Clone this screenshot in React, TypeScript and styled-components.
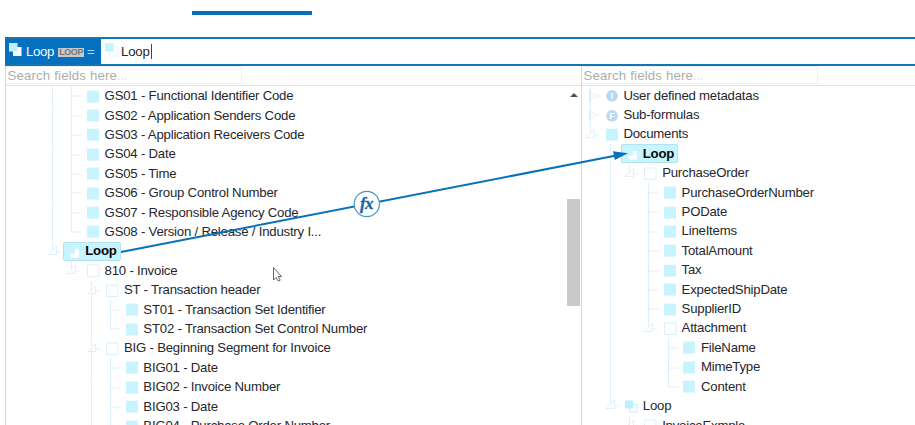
import React from "react";
import styled, { createGlobalStyle } from "styled-components";

const Global = createGlobalStyle`
  * { box-sizing: border-box; }
  body { margin: 0; background: #fff; overflow: hidden; }
`;

const Page = styled.main`
  position: relative;
  width: 915px;
  height: 425px;
  overflow: hidden;
  display: flex;
  flex-direction: column;
  padding-left: 5px;
  font-family: "Liberation Sans", Arial, sans-serif;
  font-size: 13.2px;
  color: #26262c;
`;
const TabArea = styled.header`
  height: 37px;
  flex: none;
  padding: 11px 0 0 187px;
`;
const ActiveTab = styled.div`
  width: 120px;
  height: 4px;
  background: #0570b8;
`;
const FormulaBar = styled.section`
  display: flex;
  flex: none;
  height: 29px;
  border-top: 2px solid #1574b5;
  border-bottom: 2px solid #1574b5;
`;
const Target = styled.div`
  display: flex;
  align-items: center;
  width: 96px;
  padding: 0 0 1px 4px;
  background: #0470bf;
  color: #f4fbff;
`;
const TargetIcon = styled.span`
  display: flex;
  margin-top: -4px;
`;
const TargetName = styled.span`
  margin-left: 4px;
  letter-spacing: -0.3px;
`;
const Badge = styled.span`
  height: 9px;
  margin: 3px 0 0 4px;
  padding: 0 1px;
  background: #c9c9cb;
  color: #77777d;
  font-size: 9px;
  line-height: 9.5px;
  letter-spacing: -0.4px;
  font-weight: bold;
`;
const Equals = styled.span`
  margin-left: 3px;
  color: #a5dcff;
`;
const Expression = styled.div`
  display: flex;
  align-items: center;
  padding: 0 0 1px 4px;
`;
const ExpressionText = styled.span`
  margin-left: 3px;
  padding-right: 1px;
  line-height: 15px;
  letter-spacing: -0.2px;
  border-right: 1px solid #444;
`;
const Panels = styled.div`
  display: flex;
  flex: 1;
  min-height: 0;
`;
const Panel = styled.section<{ $width: number }>`
  width: ${(p) => p.$width}px;
  flex: none;
  display: flex;
  flex-direction: column;
  border-left: 1px solid #c5dcee;
`;
const SearchRow = styled.div`
  height: 20px;
  flex: none;
  border-bottom: 1px solid #dbe7f1;
`;
const Search = styled.div`
  width: 236px;
  height: 18px;
  padding-left: 1.5px;
  border: 1px solid #edf0f4;
  border-left: 0;
  line-height: 17px;
  color: #adadad;
  letter-spacing: 0.18px;
`;
const Ellipsis = styled.span`
  color: #dcdcdc;
  letter-spacing: -0.4px;
`;
const PanelBody = styled.div`
  display: flex;
  flex: 1;
  min-height: 0;
  overflow: hidden;
`;
const Tree = styled.div<{ $inset: number; $top: number }>`
  flex: 1;
  padding-left: ${(p) => p.$inset}px;
  margin-top: ${(p) => p.$top}px;
`;
const Row = styled.div`
  display: flex;
  height: 19.41px;
  align-items: center;
  white-space: nowrap;
`;
const Guide = styled.svg`
  width: 19.4px;
  height: 19.41px;
  flex: none;
  overflow: visible;
  fill: none;
  stroke: #dff0fc;
`;
const Node = styled.div<{ $selected?: boolean }>`
  display: flex;
  align-items: center;
  height: 19px;
  margin-left: -4px;
  padding: 0 4px 0 4px;
  border-radius: 2px;
  border: ${(p) => (p.$selected ? "1px solid #b3e3f1" : "0")};
  ${(p) => p.$selected && "padding: 0 3px; color: #050505; font-weight: bold;"}
  background: ${(p) => (p.$selected ? "#c6f4ff" : "transparent")};
`;
const Label = styled.span`
  margin: -1px 0 0 4.8px;
  line-height: 19px;
  letter-spacing: -0.21px;
`;
const Icon = styled.svg`
  width: 13px;
  height: 13px;
  flex: none;
  overflow: visible;
`;
const Scrollbar = styled.div`
  width: 15px;
  flex: none;
  display: flex;
  flex-direction: column;
  align-items: center;
`;
const ScrollArrow = styled.div`
  margin-top: 7px;
  border: 4px solid transparent;
  border-top: 0;
  border-bottom-color: #505050;
`;
const Thumb = styled.div`
  width: 13px;
  height: 107px;
  margin-top: 102px;
  background: #c9c9c9;
`;
const Overlay = styled.svg`
  position: absolute;
  inset: 0;
  width: 915px;
  height: 425px;
  pointer-events: none;
`;

type Kind = "field" | "group" | "loop" | "info" | "formula" | "selected";
// Guide codes: "." empty, "|" line, "t" tee, "e" corner, "o" open node, "x" last open node, "c" closed node
type Item = [guides: string, kind: Kind, label: string];

const source: Item[] = [
  ["|t", "field", "GS01 - Functional Identifier Code"],
  ["|t", "field", "GS02 - Application Senders Code"],
  ["|t", "field", "GS03 - Application Receivers Code"],
  ["|t", "field", "GS04 - Date"],
  ["|t", "field", "GS05 - Time"],
  ["|t", "field", "GS06 - Group Control Number"],
  ["|t", "field", "GS07 - Responsible Agency Code"],
  ["|e", "field", "GS08 - Version / Release / Industry I..."],
  ["x", "selected", "Loop"],
  [".x", "group", "810 - Invoice"],
  ["..o", "group", "ST - Transaction header"],
  ["..|t", "field", "ST01 - Transaction Set Identifier"],
  ["..|e", "field", "ST02 - Transaction Set Control Number"],
  ["..o", "group", "BIG - Beginning Segment for Invoice"],
  ["..|t", "field", "BIG01 - Date"],
  ["..|t", "field", "BIG02 - Invoice Number"],
  ["..|t", "field", "BIG03 - Date"],
  ["..|t", "field", "BIG04 - Purchase Order Number"],
];
const destination: Item[] = [
  ["c", "info", "User defined metadatas"],
  ["c", "formula", "Sub-formulas"],
  ["x", "field", "Documents"],
  [".|", "selected", "Loop"],
  [".|x", "group", "PurchaseOrder"],
  [".|.t", "field", "PurchaseOrderNumber"],
  [".|.t", "field", "PODate"],
  [".|.t", "field", "LineItems"],
  [".|.t", "field", "TotalAmount"],
  [".|.t", "field", "Tax"],
  [".|.t", "field", "ExpectedShipDate"],
  [".|.t", "field", "SupplierID"],
  [".|.x", "group", "Attachment"],
  [".|..t", "field", "FileName"],
  [".|..t", "field", "MimeType"],
  [".|..e", "field", "Content"],
  [".x", "loop", "Loop"],
  ["..x", "group", "InvoiceExmple"],
];

const guidePaths: Record<string, string> = {
  ".": "",
  "|": "M4.5 0V19.4",
  t: "M4.5 0V19.4M4.5 10H14.5",
  e: "M4.5 0V10H14.5",
  o: "M4.5 0V19.4M1 12.5H8.5V5L1 12.5M8.5 10H13",
  x: "M4.5 0V9M0 12.5H8.5V4L0 12.5M8.5 10H13",
  c: "M4.5 0V19.4M3.5 4.5L9.5 10L3.5 15.5ZM9.5 10H14",
};

function NodeIcon({ kind }: { kind: Kind | "target" | "expression" }) {
  return (
    <Icon viewBox="0 0 13 13">
      {kind === "field" && <rect x="0" y="0.6" width="12" height="12" fill="#c7f4ff" />}
      {kind === "group" && <rect x="0.5" y="1" width="11.5" height="11.5" rx="0.5" fill="#fff" stroke="#d9effc" />}
      {kind === "loop" && (
        <>
          <rect x="4.5" y="4.5" width="7.5" height="7.5" fill="#fff" stroke="#d2edfb" />
          <rect x="0" y="0.5" width="8" height="8" fill="#b9f1ff" />
        </>
      )}
      {kind === "selected" && (
        <>
          <rect x="3.5" y="4" width="8.5" height="8.5" fill="#fff" />
          <rect x="0" y="0.5" width="8" height="8" fill="#c6f4ff" />
        </>
      )}
      {kind === "target" && (
        <>
          <rect x="4" y="4" width="8.5" height="9" fill="#fff" />
          <rect x="0" y="0" width="8.5" height="8.5" fill="#bdefff" />
        </>
      )}
      {kind === "expression" && (
        <>
          <rect x="4.5" y="4" width="8.5" height="9" fill="#fff" stroke="#e4f6fd" />
          <rect x="0" y="0" width="8.5" height="8.5" fill="#c3f5ff" />
        </>
      )}
      {(kind === "info" || kind === "formula") && (
        <>
          <circle cx="6" cy="6.8" r="5.8" fill="#b5daf3" />
          <text x="6" y="10" fill="#fff" fontSize="9" fontWeight="bold" textAnchor="middle">
            {kind === "info" ? "I" : "F"}
          </text>
        </>
      )}
    </Icon>
  );
}

function TreeView({ items, inset, top }: { items: Item[]; inset: number; top: number }) {
  return (
    <Tree $inset={inset} $top={top}>
      {items.map(([guides, kind, label]) => (
        <Row key={guides + label}>
          {guides.split("").map((code, i) => (
            <Guide key={i} viewBox="0 0 19.4 19.41">
              <path d={guidePaths[code]} />
            </Guide>
          ))}
          <Node $selected={kind === "selected"}>
            <NodeIcon kind={kind} />
            <Label>{label}</Label>
          </Node>
        </Row>
      ))}
    </Tree>
  );
}

function SearchField() {
  return (
    <SearchRow>
      <Search>
        Search fields here<Ellipsis>...</Ellipsis>
      </Search>
    </SearchRow>
  );
}

export default function App() {
  return (
    <>
      <Global />
      <Page>
        <TabArea>
          <ActiveTab />
        </TabArea>
        <FormulaBar>
          <Target>
            <TargetIcon>
              <NodeIcon kind="target" />
            </TargetIcon>
            <TargetName>Loop</TargetName>
            <Badge>LOOP</Badge>
            <Equals>=</Equals>
          </Target>
          <Expression>
            <TargetIcon>
              <NodeIcon kind="expression" />
            </TargetIcon>
            <ExpressionText>Loop</ExpressionText>
          </Expression>
        </FormulaBar>
        <Panels>
          <Panel $width={576}>
            <SearchField />
            <PanelBody>
              <TreeView items={source} inset={42} top={0.45} />
              <Scrollbar>
                <ScrollArrow />
                <Thumb />
              </Scrollbar>
            </PanelBody>
          </Panel>
          <Panel $width={334}>
            <SearchField />
            <PanelBody>
              <TreeView items={destination} inset={4.2} top={-0.1} />
            </PanelBody>
          </Panel>
        </Panels>
        <Overlay viewBox="0 0 915 425">
          <path d="M121 252L615 155.8" stroke="#0872b8" strokeWidth="2" />
          <path d="M628 153.3L613 151.2L614.8 160Z" fill="#0872b8" />
          <circle cx="366.8" cy="204" r="12.6" fill="#fff" stroke="#4598ca" strokeWidth="1.2" />
          <text
            x="366.5"
            y="208.5"
            textAnchor="middle"
            fontFamily="Liberation Serif, serif"
            fontStyle="italic"
            fontWeight="bold"
            fontSize="17"
            fill="#16669f"
            stroke="#16669f"
            strokeWidth="0.3"
            letterSpacing="-0.5"
          >
            fx
          </text>
          <path
            d="M273.5 267.5V280L276 277.5L278.3 281.2L280.2 280.2L278.3 276.5H281.5Z"
            fill="#fff"
            stroke="#55555c"
            strokeWidth="0.9"
          />
        </Overlay>
      </Page>
    </>
  );
}
